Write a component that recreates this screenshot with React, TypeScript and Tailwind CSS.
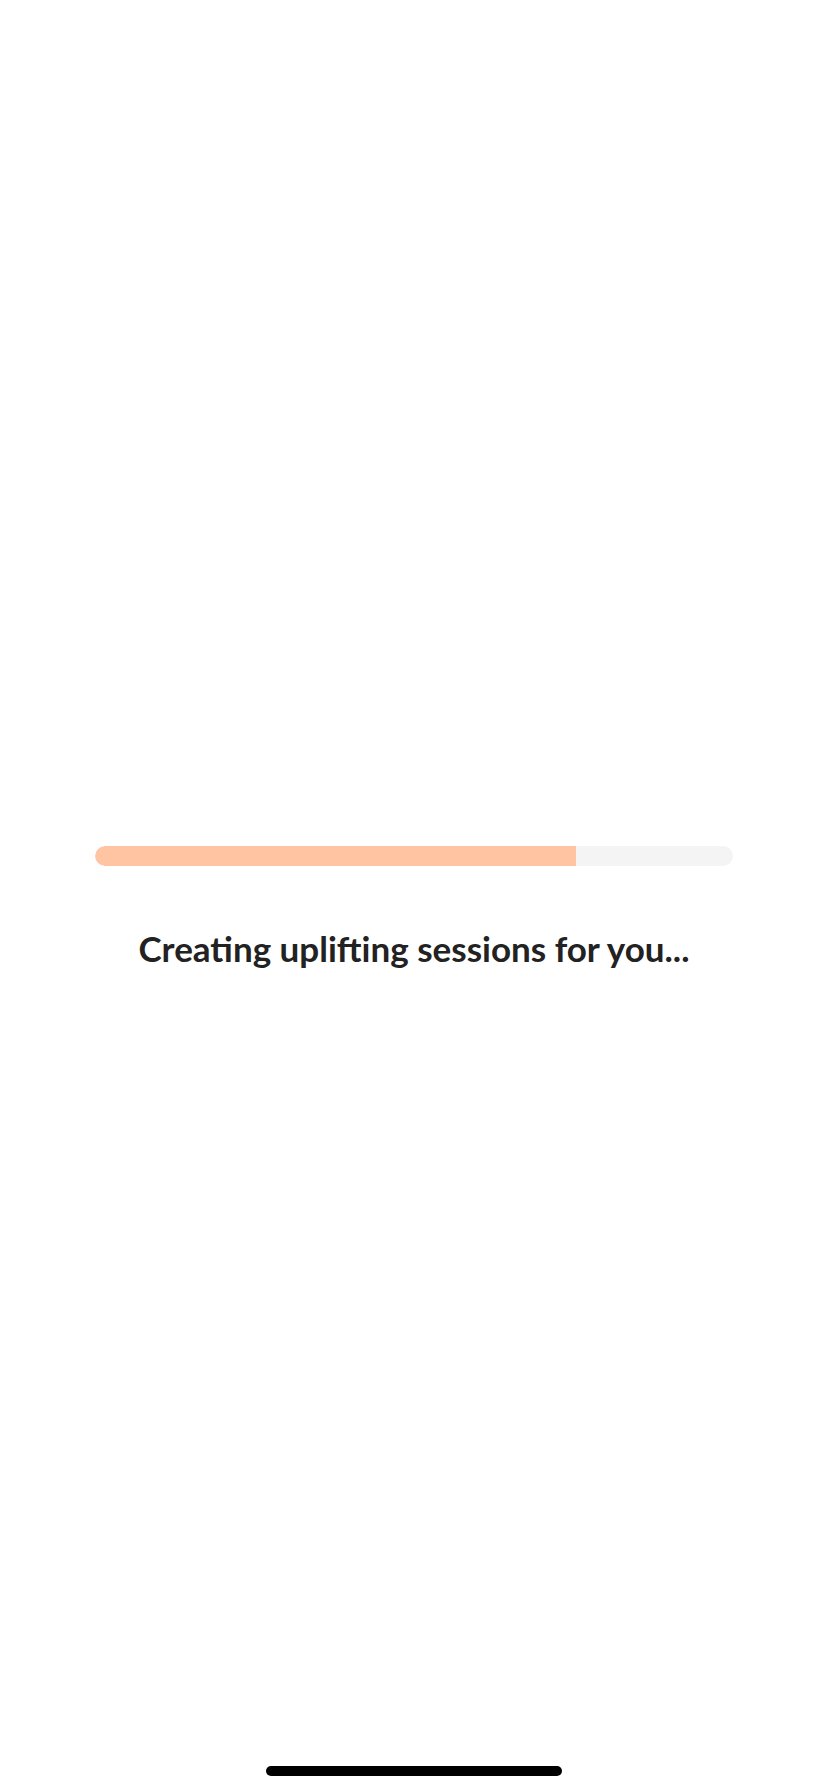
export default function App() {
  const progress = 75.4;
  return (
    <div className="relative flex h-[1792px] w-[828px] flex-col items-center bg-white" style={{ fontFamily: "Lato, 'Noto Sans', sans-serif" }}>
      <div className="mt-[846px] h-5 w-[638px] overflow-hidden rounded-full bg-[#f4f4f4]">
        <div className="h-full rounded-l-full bg-[#ffc4a1]" style={{ width: `${progress}%` }} />
      </div>
      <h1 className="mt-[62px] text-[35px] font-bold leading-[40px] text-[#222222]">
        Creating uplifting sessions for you...
      </h1>
      <div className="absolute bottom-4 left-[266px] h-[10px] w-[296px] rounded-full bg-black" />
    </div>
  );
}
